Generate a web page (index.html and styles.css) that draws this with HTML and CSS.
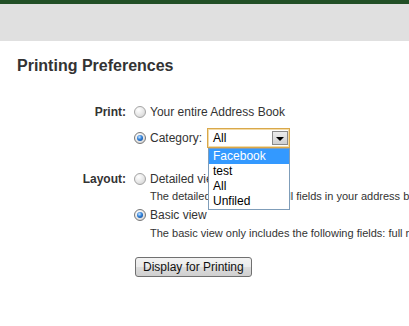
FILE: index.html
```html
<!DOCTYPE html>
<html lang="en">

<head>
    <meta charset="UTF-8">
    <meta name="viewport" content="width=device-width, initial-scale=1.0">
    <title>Printing Preferences</title>
    <link rel="stylesheet" href="styles.css">
</head>

<body>
    <div class="topbar"></div>
    <div class="header"></div>

    <div class="content">
        <h1 class="title">Printing Preferences</h1>

        <form class="prefs">
            <div class="pref-row print-row">
                <div class="pref-label">Print:</div>
                <div class="pref-options">
                    <label class="option">
                        <input class="radio" type="radio" name="print">
                        <span>Your entire Address Book</span>
                    </label>
                    <label class="option">
                        <input class="radio" type="radio" name="print" checked>
                        <span>Category:</span>
                        <div class="select">
                            <span class="select-value">All</span>
                            <span class="select-button"></span>
                            <ul class="select-list">
                                <li class="selected">Facebook</li>
                                <li>test</li>
                                <li>All</li>
                                <li>Unfiled</li>
                            </ul>
                        </div>
                    </label>
                </div>
            </div>

            <div class="pref-row layout-row">
                <div class="pref-label">Layout:</div>
                <div class="pref-options">
                    <label class="option">
                        <input class="radio" type="radio" name="layout">
                        <span>Detailed view</span>
                    </label>
                    <p class="hint">The detailed view includes all fields in your address book.</p>
                    <label class="option">
                        <input class="radio" type="radio" name="layout" checked>
                        <span>Basic view</span>
                    </label>
                    <p class="hint">The basic view only includes the following fields: full name, email, phone numbers.</p>
                </div>
            </div>

            <div class="actions">
                <button class="btn" type="button">Display for Printing</button>
            </div>
        </form>
    </div>
</body>

</html>
```

FILE: styles.css
```css
html,
body {
    overflow: hidden;
}

body {
    margin: 0;
    font-family: "Liberation Sans", Arial, sans-serif;
    color: #333;
    background-color: #fff;
}

.topbar {
    height: 4px;
    background-color: #214f26;
}

.header {
    height: 37px;
    background-color: #e0e0e0;
}

.content {
    padding: 0 17px;
}

.title {
    margin: 15px 0 0;
    font-size: 16px;
    line-height: 20px;
    font-weight: bold;
    color: #333;
}

.prefs {
    margin: 0;
}

.pref-row {
    display: flex;
    gap: 8px;
}

.print-row {
    margin-top: 26px;
}

.layout-row {
    margin-top: 21px;
}

.pref-label {
    flex: none;
    width: 109px;
    text-align: right;
    font-size: 12px;
    line-height: 20px;
    font-weight: bold;
}

.pref-options {
    display: flex;
    flex-direction: column;
}

.option {
    display: flex;
    align-items: center;
    gap: 4px;
    height: 20px;
    font-size: 12px;
    white-space: nowrap;
}

.print-row .option + .option {
    margin-top: 6px;
}

.hint {
    margin: 0 0 0 16px;
    font-size: 11px;
    line-height: 14px;
    white-space: nowrap;
}

.layout-row .hint + .option {
    margin-top: 2px;
}

.layout-row .hint:last-child {
    margin-top: 1px;
}

/* radio buttons drawn by hand */
.radio {
    appearance: none;
    -webkit-appearance: none;
    position: relative;
    flex: none;
    width: 12px;
    height: 12px;
    margin: 0;
    border: 1px solid #a4a4a4;
    border-radius: 50%;
    background: radial-gradient(circle at 35% 30%, #fff 0, #e6e6e6 55%, #cbcbcb 100%);
}

.radio:checked {
    border-color: #777;
}

.radio:checked::after {
    content: "";
    position: absolute;
    top: 2px;
    left: 2px;
    width: 6px;
    height: 6px;
    border-radius: 50%;
    background: radial-gradient(circle at 40% 35%, #cfe8ff 0, #2f80d8 45%, #083a85 100%);
}

/* the category dropdown, shown open */
.select {
    position: relative;
    box-sizing: border-box;
    width: 83px;
    height: 20px;
    margin-left: 1px;
    border: 1px solid #d9a84a;
    box-shadow: inset 0 0 0 1px #f4dba6;
    background-color: #fff;
    display: flex;
    align-items: center;
}

.select-value {
    padding-left: 5px;
    font-size: 12px;
    line-height: 18px;
    color: #000;
}

.select-button {
    position: absolute;
    top: 2px;
    right: 1px;
    box-sizing: border-box;
    width: 16px;
    height: 14px;
    border: 1px solid #8a8a8a;
    background: linear-gradient(#ececec, #d0d0d0);
}

.select-button::after {
    content: "";
    position: absolute;
    top: 5px;
    left: 3px;
    border-left: 4px solid transparent;
    border-right: 4px solid transparent;
    border-top: 4px solid #000;
}

.select-list {
    position: absolute;
    top: calc(100% + 1px);
    left: 0;
    z-index: 10;
    box-sizing: border-box;
    width: 82px;
    margin: 0;
    padding: 0;
    list-style: none;
    border: 1px solid #7f9db9;
    background-color: #fff;
}

.select-list li {
    height: 15px;
    padding-left: 4px;
    font-size: 12px;
    line-height: 15px;
    color: #000;
}

.select-list li.selected {
    background-color: #3399ff;
    color: #fff;
}

.actions {
    margin-top: 17px;
    padding-left: 118px;
}

.btn {
    box-sizing: border-box;
    height: 20px;
    padding: 0 7px;
    font-family: "Liberation Sans", Arial, sans-serif;
    font-size: 12px;
    color: #111;
    border: 1px solid #707070;
    border-radius: 3px;
    background: linear-gradient(#f2f2f2 0, #ebebeb 50%, #dddddd 50%, #cfcfcf 100%);
}
```
